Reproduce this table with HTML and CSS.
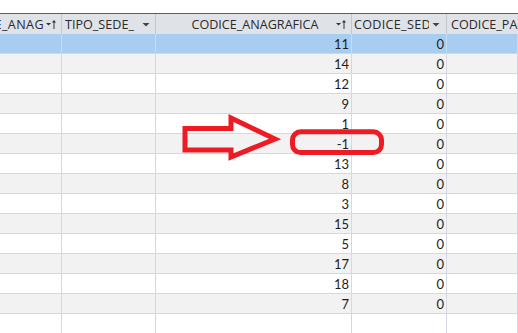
FILE: index.html
```html
<!DOCTYPE html>
<html>
<head>
<meta charset="utf-8">
<link rel="stylesheet" href="styles.css">
</head>
<body>
<div class="sheet">
  <div class="topgap"></div>
  <div class="row head">
    <div class="hc c1"><span class="ht">CODICE_ANAG</span><svg class="ico" width="10" height="10" viewBox="0 0 10 10"><polygon points="0,4 5,4 2.5,6.5" fill="#333"/><line x1="8" y1="2" x2="8" y2="10" stroke="#333" stroke-width="1"/><polygon points="6,3.5 10,3.5 8,1" fill="#333"/></svg></div>
    <div class="hc c2"><span class="ht">TIPO_SEDE_</span><svg class="ico dd" width="8" height="5" viewBox="0 0 8 5"><polygon points="0.5,1 7.5,1 4,4.5" fill="#444"/></svg></div>
    <div class="hc c3"><span class="ht center">CODICE_ANAGRAFICA</span><svg class="ico" width="10" height="10" viewBox="0 0 10 10"><polygon points="0,4 5,4 2.5,6.5" fill="#333"/><line x1="8" y1="2" x2="8" y2="10" stroke="#333" stroke-width="1"/><polygon points="6,3.5 10,3.5 8,1" fill="#333"/></svg></div>
    <div class="hc c4"><span class="ht">CODICE_SEDE</span><svg class="ico dd" width="8" height="5" viewBox="0 0 8 5"><polygon points="0.5,1 7.5,1 4,4.5" fill="#444"/></svg></div>
    <div class="hc c5"><span class="ht">CODICE_PAESE</span></div>
  </div>
  <div class="row sel"><div class="dc"></div><div class="dc"></div><div class="dc">11</div><div class="dc">0</div><div class="dc"></div></div>
  <div class="row alt"><div class="dc"></div><div class="dc"></div><div class="dc">14</div><div class="dc">0</div><div class="dc"></div></div>
  <div class="row"><div class="dc"></div><div class="dc"></div><div class="dc">12</div><div class="dc">0</div><div class="dc"></div></div>
  <div class="row alt"><div class="dc"></div><div class="dc"></div><div class="dc">9</div><div class="dc">0</div><div class="dc"></div></div>
  <div class="row"><div class="dc"></div><div class="dc"></div><div class="dc">1</div><div class="dc">0</div><div class="dc"></div></div>
  <div class="row alt"><div class="dc"></div><div class="dc"></div><div class="dc">-1</div><div class="dc">0</div><div class="dc"></div></div>
  <div class="row"><div class="dc"></div><div class="dc"></div><div class="dc">13</div><div class="dc">0</div><div class="dc"></div></div>
  <div class="row alt"><div class="dc"></div><div class="dc"></div><div class="dc">8</div><div class="dc">0</div><div class="dc"></div></div>
  <div class="row"><div class="dc"></div><div class="dc"></div><div class="dc">3</div><div class="dc">0</div><div class="dc"></div></div>
  <div class="row alt"><div class="dc"></div><div class="dc"></div><div class="dc">15</div><div class="dc">0</div><div class="dc"></div></div>
  <div class="row"><div class="dc"></div><div class="dc"></div><div class="dc">5</div><div class="dc">0</div><div class="dc"></div></div>
  <div class="row alt"><div class="dc"></div><div class="dc"></div><div class="dc">17</div><div class="dc">0</div><div class="dc"></div></div>
  <div class="row"><div class="dc"></div><div class="dc"></div><div class="dc">18</div><div class="dc">0</div><div class="dc"></div></div>
  <div class="row alt"><div class="dc"></div><div class="dc"></div><div class="dc">7</div><div class="dc">0</div><div class="dc"></div></div>
  <div class="row blank"><div class="dc"></div><div class="dc"></div><div class="dc"></div><div class="dc"></div><div class="dc"></div></div>
</div>
<svg class="annot" width="518" height="333" viewBox="0 0 518 333">
  <polygon points="185,128.5 231,128.5 231,118 275,139 231,157 231,150 185,150" fill="none" stroke="#ed1c24" stroke-width="5" stroke-linejoin="miter"/>
  <rect x="292.5" y="131.8" width="89" height="20.7" rx="8" ry="8" fill="none" stroke="#ed1c24" stroke-width="5"/>
</svg>
</body>
</html>
```
FILE: styles.css
```css
html, body {
  margin: 0;
  padding: 0;
  background: #ffffff;
}
body {
  width: 518px;
  height: 333px;
  overflow: hidden;
  position: relative;
  font-family: "Open Sans", "Noto Sans", sans-serif;
}
.sheet {
  display: flex;
  flex-direction: column;
}
.topgap {
  height: 13px;
  background: #ffffff;
}
.row {
  display: grid;
  grid-template-columns: 62px 94px 196px 95px 71px;
  height: 20px;
  box-sizing: border-box;
}
.head {
  height: 21px;
  background: #dfe3e8;
  border-top: 1px solid #a0414f;
}
.hc {
  display: flex;
  align-items: center;
  box-sizing: border-box;
  border-right: 1px solid #c3c7cd;
  overflow: hidden;
  white-space: nowrap;
  font-size: 12.6px;
  color: #2a2a2a;
  height: 20px;
}
.ht {
  overflow: hidden;
  flex: 1 1 auto;
  min-width: 0;
}
.ht.center {
  text-align: center;
}
.ico {
  flex: 0 0 auto;
}
.c1 {
  justify-content: flex-end;
  padding-right: 5px;
}
.c1 .ht {
  flex: 0 0 auto;
  direction: rtl;
  margin-right: 2px;
  letter-spacing: 0.4px;
}
.c2 {
  padding-left: 3px;
  padding-right: 5px;
}
.c3 {
  padding-left: 22px;
  padding-right: 5px;
}
.c3 .ht {
  margin-right: 4px;
}
.c4 {
  padding-left: 3px;
  padding-right: 6px;
  justify-content: flex-end;
}
.c4 .ht {
  margin-right: 3px;
  flex: 0 0 75px;
  letter-spacing: 0.3px;
}
.c5 {
  padding-left: 4px;
  border-right: none;
}
.c5 .ht {
  overflow: visible;
}
.dc {
  box-sizing: border-box;
  border-right: 1px solid #d4d9e1;
  border-bottom: 1px solid #d4d9e1;
  text-align: right;
  padding-right: 2px;
  font-family: "Lato", "Open Sans", sans-serif;
  font-size: 13px;
  line-height: 21px;
  color: #1e1e1e;
  height: 20px;
}
.sel .dc {
  background: #a7cdf0;
  border-bottom-color: #c9d9ea;
  border-right-color: #c7dcf1;
}
.alt .dc {
  background: #f2f2f2;
}
.blank .dc {
  border-bottom: none;
}
.annot {
  position: absolute;
  top: 0;
  left: 0;
  pointer-events: none;
}
```
